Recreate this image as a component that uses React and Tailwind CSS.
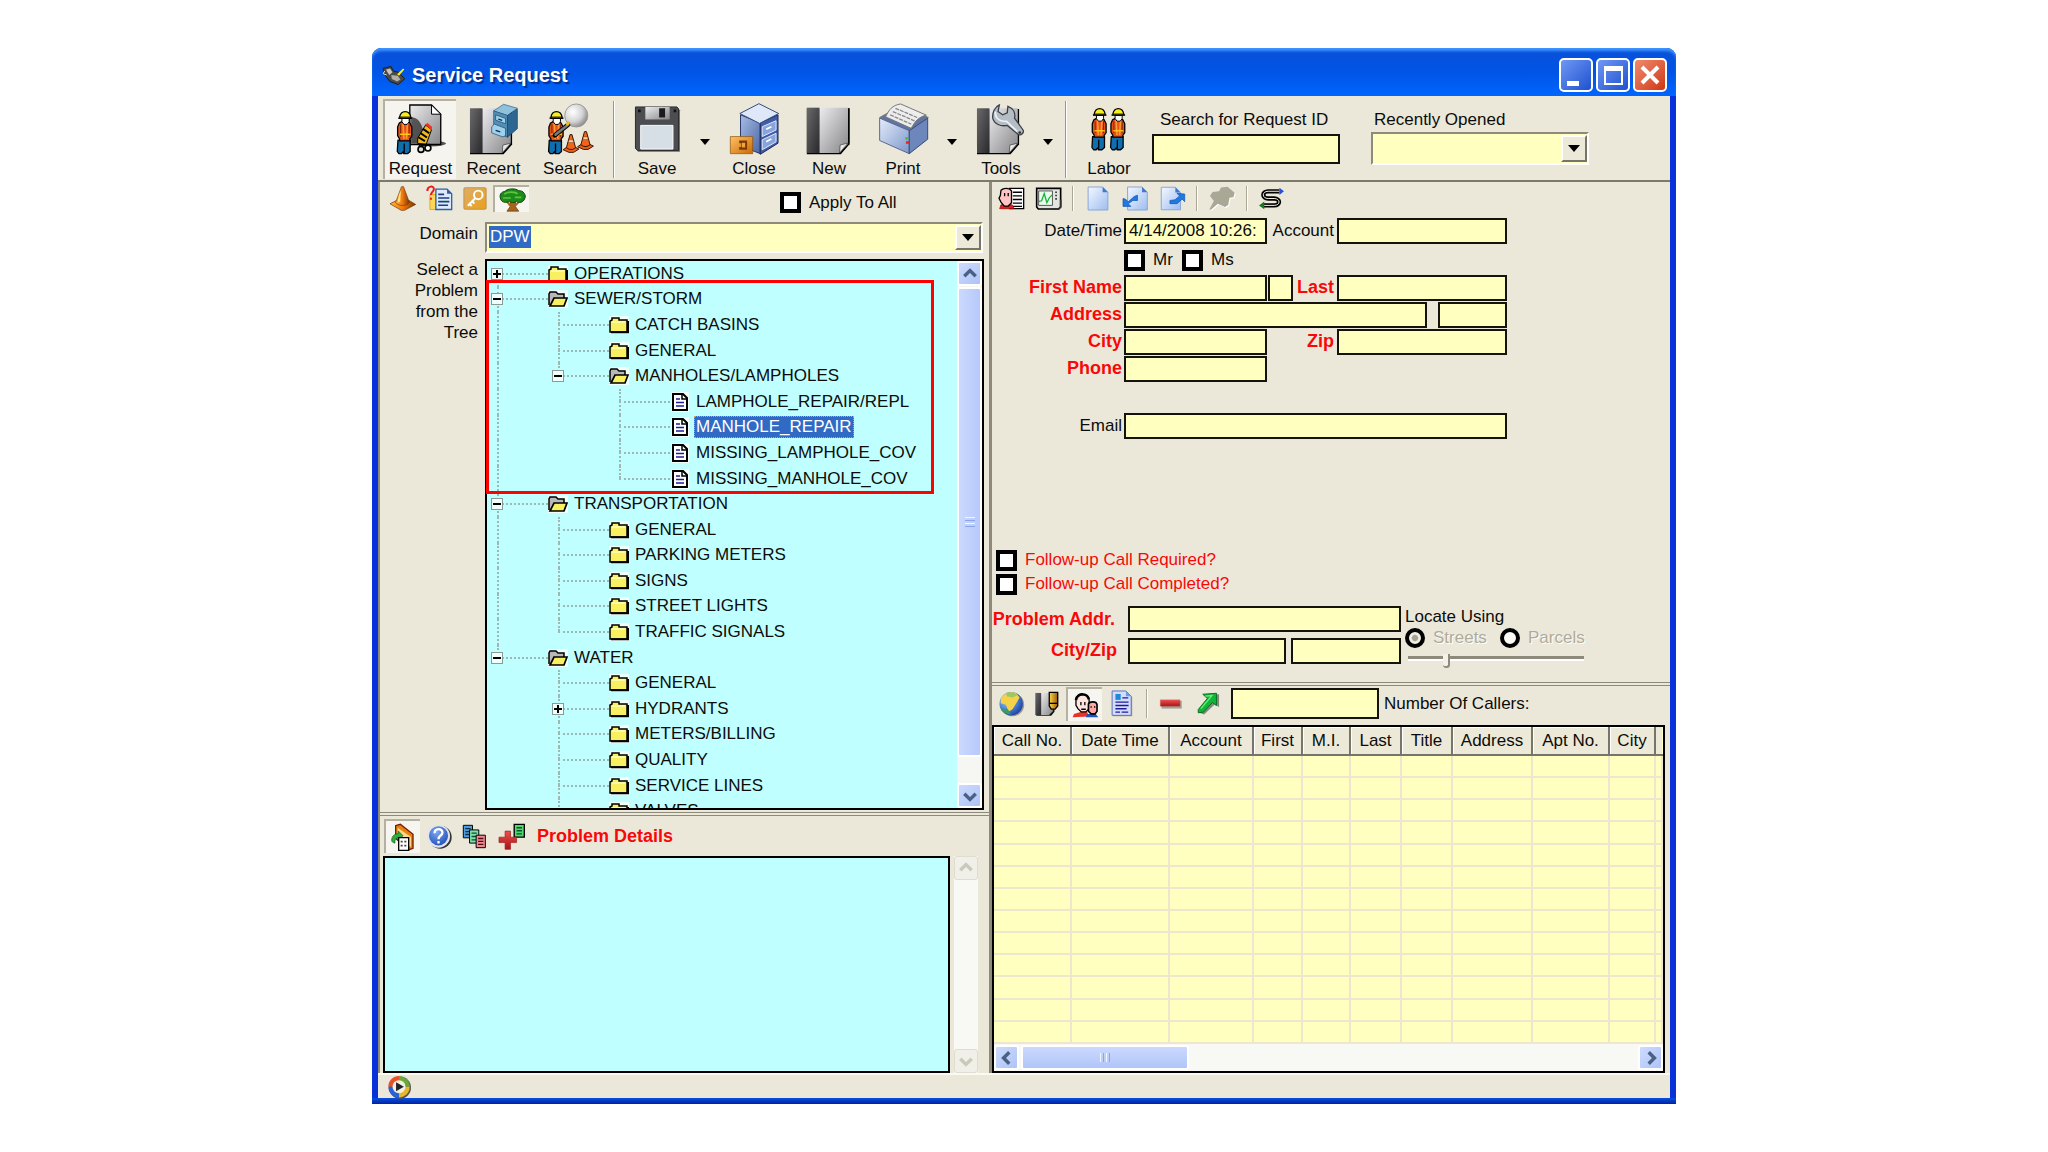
import React from "react";

function Ico({ box, className, children }) {
  return (
    <svg viewBox={box} className={"block shrink-0 " + className} aria-hidden="true">
      {children}
    </svg>
  );
}

function Gradients() {
  return (
    <svg width="0" height="0" className="absolute" aria-hidden="true">
      <defs>
        <linearGradient id="gGray" x1="0" y1="0" x2="1" y2="1">
          <stop offset="0" stopColor="#ececee" />
          <stop offset="1" stopColor="#868689" />
        </linearGradient>
        <linearGradient id="gDark" x1="0" y1="0" x2="1" y2="1">
          <stop offset="0" stopColor="#6a6a6c" />
          <stop offset="1" stopColor="#29292b" />
        </linearGradient>
        <linearGradient id="gFold" x1="0" y1="0" x2="1" y2="1">
          <stop offset="0" stopColor="#ffffff" />
          <stop offset="1" stopColor="#bdbdbd" />
        </linearGradient>
        <linearGradient id="gBlue" x1="0" y1="0" x2="1" y2="1">
          <stop offset="0" stopColor="#e4ecfa" />
          <stop offset="1" stopColor="#7d96cb" />
        </linearGradient>
        <linearGradient id="gBlueD" x1="0" y1="0" x2="1" y2="1">
          <stop offset="0" stopColor="#a9bde4" />
          <stop offset="1" stopColor="#4a66a6" />
        </linearGradient>
        <linearGradient id="gOrange" x1="0" y1="0" x2="1" y2="1">
          <stop offset="0" stopColor="#ffc266" />
          <stop offset="1" stopColor="#c96a06" />
        </linearGradient>
        <linearGradient id="gKey" x1="0" y1="0" x2="1" y2="1">
          <stop offset="0" stopColor="#dcae6c" />
          <stop offset="1" stopColor="#e9a01c" />
        </linearGradient>
        <linearGradient id="gPage" x1="0" y1="0" x2="1" y2="1">
          <stop offset="0" stopColor="#f4f8ff" />
          <stop offset="1" stopColor="#9dbdf0" />
        </linearGradient>
        <linearGradient id="gCone" x1="0" y1="0" x2="1" y2="0">
          <stop offset="0" stopColor="#ffb53a" />
          <stop offset="0.5" stopColor="#f0780c" />
          <stop offset="1" stopColor="#7c3604" />
        </linearGradient>
        <linearGradient id="gRed" x1="0" y1="0" x2="0" y2="1">
          <stop offset="0" stopColor="#f0504e" />
          <stop offset="1" stopColor="#a81216" />
        </linearGradient>
        <linearGradient id="gGold" x1="0" y1="0" x2="1" y2="0">
          <stop offset="0" stopColor="#ffd84a" />
          <stop offset="1" stopColor="#9a5a06" />
        </linearGradient>
        <radialGradient id="gBall" cx="0.35" cy="0.35" r="0.7">
          <stop offset="0" stopColor="#ffffff" />
          <stop offset="0.6" stopColor="#d4d4d4" />
          <stop offset="1" stopColor="#8a8a8a" />
        </radialGradient>
        <radialGradient id="gHelp" cx="0.4" cy="0.3" r="0.8">
          <stop offset="0" stopColor="#7ea6f2" />
          <stop offset="1" stopColor="#1c4bb4" />
        </radialGradient>
        <radialGradient id="gGlobe" cx="0.35" cy="0.35" r="0.8">
          <stop offset="0" stopColor="#a8dcff" />
          <stop offset="0.6" stopColor="#3a72c8" />
          <stop offset="1" stopColor="#1d2c8a" />
        </radialGradient>
      </defs>
    </svg>
  );
}

/* ---------- toolbar drawings ---------- */

function Worker() {
  return (
    <g stroke="#000" strokeWidth="4" strokeLinejoin="round">
      <path d="M90 306h37v34l-8 7h-11l-2-6-5 6H93l-5-7z" fill="#0f6fae" />
      <path d="M109 316v28" />
      <path d="M94 254l12-7h10l10 7 6 12v28l-6 8v6H95v-6l-6-10v-26z" fill="#e8521a" />
      <path d="M98 258v38M124 258v38" stroke="#7c2408" strokeWidth="3" />
      <path d="M105 252l3 50M119 252l-3 50" stroke="#ff9a2c" strokeWidth="5" />
      <path d="M96 288h32" stroke="#ffd21c" strokeWidth="4" />
      <path d="M102 240h22v10l-6 8h-10l-6-8z" fill="#fff" strokeWidth="3" />
      <path d="M95 236c2-12 8-17 17-17s15 5 17 17z" fill="#f6ee1e" />
      <path d="M91 239h42" strokeWidth="5" />
      <path d="M98 235h28" stroke="#a89c0c" strokeWidth="3" />
    </g>
  );
}

function RequestIcon() {
  return (
    <Ico box="85 193 150 158" className="h-[52px] w-[50px]">
      <ellipse cx="190" cy="316" rx="46" ry="9" fill="#555" />
      <path d="M126 199h66l28 28v92h-94z" fill="url(#gGray)" stroke="#000" strokeWidth="4" />
      <path d="M192 199v28h28z" fill="#fff" stroke="#000" strokeWidth="3" />
      <path d="M130 236c26 0 42 30 36 80h-36z" fill="#2c2c2c" opacity=".75" />
      <Worker />
      <path d="M150 300l24-40 18 14-16 44-26-2z" fill="#f0b81c" stroke="#000" strokeWidth="3" />
      <path d="M158 284l20 14M165 271l20 14M152 297l20 12" stroke="#000" strokeWidth="6" />
      <path d="M172 258l8-4 14 12-2 10z" fill="#e8352a" />
      <path d="M154 320h34" stroke="#000" strokeWidth="6" />
      <circle cx="160" cy="334" r="9" fill="#ddd" stroke="#000" strokeWidth="5" />
      <circle cx="181" cy="330" r="9" fill="#fff" stroke="#000" strokeWidth="5" />
    </Ico>
  );
}

function Notebook({ x = 0 }) {
  return (
    <g transform={"translate(" + x + " 0)"}>
      <path d="M308 208h128v108l-26 30H308z" fill="#000" />
      <path d="M308 206h38v136h-38z" fill="url(#gDark)" />
      <path d="M346 206h86v108l-26 28h-60z" fill="url(#gGray)" />
      <path d="M406 342l2-24 24-6z" fill="url(#gFold)" stroke="#333" strokeWidth="2" />
    </g>
  );
}

function RecentIcon() {
  return (
    <Ico box="306 190 150 158" className="h-[52px] w-[50px]">
      <Notebook />
      <path d="M380 214l30-20 42 12-30 22z" fill="#8fc0dc" stroke="#2b5a78" strokeWidth="2" />
      <path d="M380 214l42 14v66l-42-18z" fill="#4f8fb8" stroke="#24506e" strokeWidth="2" />
      <path d="M422 228l30-20v60l-30 26z" fill="#2d6690" stroke="#1b3f5a" strokeWidth="2" />
      <path d="M386 226l30 11v16l-30-11zM374 262l8-8 34 13v22l-8 4-34-12z" fill="#9fd0ec" stroke="#1b3f5a" strokeWidth="2" />
      <path d="M394 239l12 4M386 273l14 5" stroke="#103048" strokeWidth="4" />
    </Ico>
  );
}

function Cone({ x, y }) {
  return (
    <g transform={"translate(" + x + " " + y + ")"} stroke="#3a1402" strokeWidth="3">
      <path d="M-24 48l12-8h24l12 6-16 10h-14z" fill="#e8601a" />
      <path d="M-3 2h6l11 40-9 5h-10l-9-5z" fill="#f0641a" />
      <path d="M-6 18l12 0 2 8H-8z" fill="#ffd0a8" strokeWidth="1" />
    </g>
  );
}

function SearchIcon() {
  return (
    <Ico box="529 190 150 158" className="h-[52px] w-[50px]">
      <g transform="translate(451 -3)">
        <Worker />
      </g>
      <circle cx="623" cy="228" r="35" fill="url(#gBall)" stroke="#9a9a9a" strokeWidth="3" />
      <path d="M598 256l-40 32" stroke="#000" strokeWidth="14" strokeLinecap="round" />
      <path d="M598 256l-38 30" stroke="#77777a" strokeWidth="8" strokeLinecap="round" />
      <path d="M602 250l-10 6" stroke="#e8c01c" strokeWidth="8" />
      <Cone x={607} y={284} />
      <Cone x={651} y={275} />
    </Ico>
  );
}

function SaveIcon() {
  return (
    <Ico box="803 190 140 158" className="h-[52px] w-[47px]">
      <path d="M809 206h126l6 6v126H813z" fill="#000" opacity=".55" />
      <path d="M806 202h126l5 6v126H812l-6-6z" fill="#4c4d50" stroke="#2a2a2c" strokeWidth="3" />
      <path d="M836 202h74v38h-74z" fill="url(#gGray)" />
      <path d="M878 206h18v28h-18z" fill="#1b1b1d" />
      <path d="M822 258h98v72h-98z" fill="#d6dee6" stroke="#fff" strokeWidth="3" />
      <path d="M814 210h8v8h-8zM922 210h8v8h-8z" fill="#111" />
    </Ico>
  );
}

function CloseIcon() {
  return (
    <Ico box="1083 190 155 158" className="h-[52px] w-[51px]">
      <path d="M1118 226l60 24v94l-60-24z" fill="url(#gBlueD)" stroke="#26386a" strokeWidth="3" />
      <path d="M1178 250l54-24v86l-54 34z" fill="#3f5ea6" stroke="#1b2b58" strokeWidth="3" />
      <path d="M1116 222l58-30 60 30-58 30z" fill="#dfe8f8" stroke="#33467c" strokeWidth="3" />
      <path d="M1184 262l42-18v28l-42 20zM1184 302l42-20v26l-42 24z" fill="#88a4dc" stroke="#dfe8fa" strokeWidth="3" />
      <path d="M1196 270l16-8M1196 308l16-9" stroke="#fff" strokeWidth="5" />
      <path d="M1087 292h68v52h-68z" fill="url(#gOrange)" stroke="#8a4a06" strokeWidth="2" />
      <path d="M1114 304h24v28h-24v-8h6v-12h-6z" fill="#7a3c04" />
      <path d="M1122 311h10v14h-10z" fill="#f5a33a" />
    </Ico>
  );
}

function NewIcon() {
  return (
    <Ico box="306 198 140 150" className="h-[50px] w-[47px]">
      <Notebook />
      <path d="M434 208v106" stroke="#000" strokeWidth="4" />
    </Ico>
  );
}

function PrintIcon() {
  return (
    <Ico box="235 190 155 158" className="h-[52px] w-[51px]">
      <path d="M240 234l62-34 86 34-62 44z" fill="#5f74a4" stroke="#777" strokeWidth="3" />
      <path d="M240 236l90 38v70l-90-40z" fill="url(#gBlue)" stroke="#55698f" strokeWidth="3" />
      <path d="M330 274l56-38v64l-56 44z" fill="#6d86bc" stroke="#3a4a70" strokeWidth="3" />
      <path d="M258 232c10-20 20-36 46-39l78 34c-20 4-34 16-46 40z" fill="#ededed" stroke="#777" strokeWidth="3" />
      <path d="M288 206l66 28M280 216l66 28M272 226l64 28" stroke="#8a8a8a" strokeWidth="4" strokeDasharray="12 3" />
      <path d="M318 294h8v7h-8z" fill="#2ec82e" />
      <path d="M320 306h9v8h-9z" fill="#e82a1a" />
    </Ico>
  );
}

function ToolsIcon() {
  return (
    <Ico box="534 190 150 158" className="h-[52px] w-[50px]">
      <Notebook x={228} />
      <path
        d="M604 196l-4 20 14 10 14-6 2-20c16 6 24 20 20 36l26 36c4 8-6 18-14 14l-34-28c-20 4-40-4-44-22-2-16 6-34 20-40z"
        fill="#b4bcc4"
        stroke="#3a4048"
        strokeWidth="4"
      />
      <path d="M592 216c-2 16 8 30 34 30l32 30" fill="none" stroke="#eef2f6" strokeWidth="5" />
      <circle cx="666" cy="280" r="4" fill="#333" />
    </Ico>
  );
}

function LaborIcon() {
  return (
    <Ico box="85 215 112 138" className="h-[45px] w-[36px]">
      <Worker />
      <g transform="translate(58 0)">
        <Worker />
      </g>
    </Ico>
  );
}

function AppIcon() {
  return (
    <Ico box="42 74 70 60" className="h-[20px] w-[23px]">
      <path d="M45 84l24-6 8 14 16 4 18 20-20 17-26-10-14-20z" fill="#4a4a48" stroke="#1c1c1a" strokeWidth="3" />
      <path d="M54 88l12-4 8 12-10 8z" fill="#c8c8c0" />
      <path d="M70 104l20 2 8 12-10 6-16-8z" fill="#b0b0a8" />
      <path d="M88 102l18-18 4 3-16 19z" fill="#f6ee1e" />
      <path d="M50 92l-4 8 10 4" fill="none" stroke="#eee" strokeWidth="3" />
    </Ico>
  );
}

/* ---------- small strip drawings ---------- */

function ConeIcon() {
  return (
    <Ico box="60 440 82 76" className="h-[25px] w-[27px]">
      <path d="M63 494l20-10h38l20 12-34 18h-10z" fill="url(#gCone)" stroke="#6b2c02" strokeWidth="2" />
      <path d="M98 442h6l18 48c-8 12-34 12-42 0z" fill="url(#gCone)" stroke="#7c3604" strokeWidth="2" />
      <path d="M90 468l6-16-2 36-8 2z" fill="#ffe28a" />
    </Ico>
  );
}

function FormIcon() {
  return (
    <Ico box="172 438 82 78" className="h-[26px] w-[27px]">
      <path d="M184 466h30v46h-30z" fill="#ffd65a" stroke="#e8a820" strokeWidth="3" />
      <path d="M202 450h34l14 14v48h-48z" fill="#dceafc" stroke="#2f5fa0" strokeWidth="4" />
      <path d="M236 450v14h14z" fill="#2f5fa0" />
      <path d="M209 466h18M209 477h34M209 488h34M209 499h30" stroke="#1b3f78" strokeWidth="5" />
      <path d="M176 456c0-16 20-18 20-6 0 8-9 8-9 18M187 476v6" fill="none" stroke="#e81c1c" strokeWidth="6" />
    </Ico>
  );
}

function KeyIcon() {
  return (
    <Ico box="286 444 72 70" className="h-[23px] w-[24px]">
      <rect x="288" y="446" width="68" height="66" rx="4" fill="url(#gKey)" stroke="#b08030" strokeWidth="2" />
      <circle cx="332" cy="468" r="13" fill="none" stroke="#fff" strokeWidth="6" />
      <path d="M322 479l-22 22M306 496l6 6M314 488l6 6" stroke="#fff" strokeWidth="6" />
    </Ico>
  );
}

function TreeIcon() {
  return (
    <Ico box="396 442 82 72" className="h-[24px] w-[27px]">
      <path d="M430 478h16v20l10 14h-36l10-14z" fill="#a8641c" stroke="#5a3208" strokeWidth="2" />
      <path d="M434 500l-14-18M444 496l16-16" stroke="#a8641c" strokeWidth="6" />
      <path d="M400 472c-4-14 8-20 14-20 8-10 34-10 42-2 14-2 24 14 18 24-4 12-18 14-24 8-8 6-18 4-22 0-10 6-26 4-28-10z" fill="#1f8a1c" stroke="#0c4a0a" strokeWidth="3" />
      <path d="M412 460c10-8 34-8 40 0M408 472h24M444 470h20" stroke="#5ac83a" strokeWidth="5" fill="none" />
    </Ico>
  );
}

function CallerIcon() {
  return (
    <Ico box="596 446 80 70" className="h-[23px] w-[27px]">
      <path d="M630 450h43v62h-43z" fill="#fff" stroke="#000" strokeWidth="4" />
      <path d="M640 462h28M640 473h28M640 484h28M640 495h28M640 505h28" stroke="#000" strokeWidth="4" />
      <path d="M600 512l4-12h34l6 12z" fill="#e81c1c" stroke="#900" strokeWidth="2" />
      <path d="M604 456c8-8 26-8 32 2v36l-10 10h-12l-10-12-6-12 4-8z" fill="#ffc4c4" stroke="#000" strokeWidth="4" />
      <path d="M615 464v10M626 464v10" stroke="#000" strokeWidth="4" />
    </Ico>
  );
}

function MonitorIcon() {
  return (
    <Ico box="707 446 80 70" className="h-[23px] w-[27px]">
      <path d="M711 450h73v56l-6 7h-62l-5-6z" fill="#e4e4e0" stroke="#000" strokeWidth="5" />
      <path d="M717 458h42v44h-42z" fill="#eafcea" stroke="#555" strokeWidth="3" />
      <path d="M718 490l8-2 8-22 8 28 8-16 8-8" fill="none" stroke="#14b43c" strokeWidth="4" />
      <path d="M768 462h4M768 472h4M768 482h4" stroke="#000" strokeWidth="5" />
      <path d="M784 484v24l-8 6h-20" fill="none" stroke="#333" strokeWidth="5" />
    </Ico>
  );
}

const PAGE_BOX = { plain: "864 440 66 76", in: "966 440 80 76", out: "860 440 84 76" };

function PageIcon({ arrow = "plain" }) {
  return (
    <Ico box={PAGE_BOX[arrow]} className={arrow === "plain" ? "h-[25px] w-[22px]" : "h-[25px] w-[27px]"}>
      <g transform={arrow === "in" ? "translate(115 0)" : undefined}>
        <path d="M867 443h44l16 16v54h-60z" fill="url(#gPage)" stroke="#86a6dc" strokeWidth="3" />
        <path d="M911 443v16h16z" fill="#3f78d0" />
      </g>
      {arrow === "in" && <path d="M968 478v24h24l-8-8 14-10h14v-16l-10 4-18 16-8-8z" fill="#1f7ae0" stroke="#0d4fae" strokeWidth="2" />}
      {arrow === "out" && <path d="M940 464v24l-8-8-16 14h-22v-10l16-2 14-12-8-8z" fill="#1f7ae0" stroke="#0d4fae" strokeWidth="2" />}
    </Ico>
  );
}

function PinIcon() {
  return (
    <Ico box="1224 440 86 76" className="h-[25px] w-[28px]">
      <path d="M1264 444l20-2 22 18-4 14-12 2-4 22-10 6-22-10-20 18h-6l14-26-12-16 8-12 20-2z" fill="#fff" transform="translate(3 3)" />
      <path d="M1264 444l20-2 22 18-4 14-12 2-4 22-10 6-22-10-20 18h-6l14-26-12-16 8-12 20-2z" fill="#a9a796" />
    </Ico>
  );
}

function SwapIcon() {
  return (
    <Ico box="54 446 80 70" className="h-[23px] w-[27px]">
      <path d="M118 459H84c-20 0-20 22 0 22h18c20 0 20 21 0 21H70" fill="none" stroke="#000" strokeWidth="13" />
      <path d="M118 459H84c-20 0-20 22 0 22h18c20 0 20 21 0 21H70" fill="none" stroke="#f4f2e8" strokeWidth="3" />
      <path d="M118 448l14 11-14 11z" fill="#2c4ce0" />
      <path d="M72 490l-16 12 16 12z" fill="#127a22" />
    </Ico>
  );
}

function FolderOutIcon() {
  return (
    <Ico box="72 68 72 84" className="h-[28px] w-[24px]">
      <path d="M86 76l14-4 38 30v42l-12 4-40-34z" fill="#e8820c" stroke="#7a1c04" strokeWidth="4" />
      <path d="M92 82l40 28v30l-40-28z" fill="#ffd890" />
      <path d="M74 120c0-12 8-20 20-20v-8l14 14-14 14v-8c-8 0-12 8-10 16-6 0-10-4-10-8z" fill="#2fae3c" stroke="#0c5a14" strokeWidth="2" />
      <path d="M95 112h30v38H95z" fill="#fff" stroke="#000" strokeWidth="4" />
      <path d="M101 124h6M112 124h6M101 136h6M112 136h6" stroke="#444" strokeWidth="5" />
    </Ico>
  );
}

function HelpIcon() {
  return (
    <Ico box="174 70 80 76" className="h-[25px] w-[27px]">
      <circle cx="216" cy="110" r="35" fill="#333" />
      <circle cx="211" cy="107" r="35" fill="#dfe4ee" />
      <circle cx="211" cy="106" r="29" fill="url(#gHelp)" />
      <path d="M199 98c0-16 24-16 24-2 0 10-12 8-12 20M211 122v7" fill="none" stroke="#fff" strokeWidth="7" />
    </Ico>
  );
}

function SheetsIcon() {
  return (
    <Ico box="284 66 74 76" className="h-[25px] w-[25px]">
      <path d="M287 70h28v38h-28z" fill="#4f9bd8" stroke="#000" strokeWidth="3" />
      <path d="M293 80h16M293 89h16M293 98h16" stroke="#0c2c50" strokeWidth="4" />
      <path d="M306 84h28v40h-28z" fill="#7fe0a8" stroke="#000" strokeWidth="3" />
      <path d="M312 94h16M312 104h16M312 114h16" stroke="#0c5030" strokeWidth="4" />
      <path d="M326 100h28v38h-28z" fill="#f08a94" stroke="#000" strokeWidth="3" />
      <path d="M332 110h16M332 119h16M332 128h16" stroke="#501018" strokeWidth="4" />
    </Ico>
  );
}

function AddSheetIcon() {
  return (
    <Ico box="392 66 80 80" className="h-[27px] w-[27px]">
      <path d="M440 70h30v38h-30z" fill="#4fd870" stroke="#000" strokeWidth="4" />
      <path d="M447 80h16M447 89h16M447 98h16" stroke="#0c5030" strokeWidth="4" />
      <path d="M413 90h16v18h18v16h-18v20h-16v-20h-18v-16h18z" fill="url(#gRed)" stroke="#a01c1c" strokeWidth="2" />
    </Ico>
  );
}

function GlobeIcon() {
  return (
    <Ico box="36 28 82 80" className="h-[26px] w-[27px]">
      <circle cx="80" cy="70" r="36" fill="#666" opacity=".6" />
      <circle cx="76" cy="67" r="36" fill="url(#gGlobe)" />
      <path d="M44 52c8-16 30-24 46-18l12 14-8 14-14 22-12 8-8-22-16-4z" fill="#f6d24a" />
      <path d="M62 34c12-4 24-2 34 6l-16 8-18-4z" fill="#9cc860" />
      <path d="M44 82c6 12 18 18 32 18l-10-16z" fill="#3c9a5a" />
    </Ico>
  );
}

function BookPenIcon() {
  return (
    <Ico box="146 28 78 80" className="h-[26px] w-[26px]">
      <path d="M152 36h56v56l-10 12h-46z" fill="#111" />
      <path d="M149 34h18v68h-18z" fill="url(#gDark)" />
      <path d="M167 34h36v56l-12 12h-24z" fill="url(#gGray)" />
      <path d="M192 32h26v42l-8 10h-12l-6-10z" fill="url(#gGold)" stroke="#000" strokeWidth="4" />
      <path d="M192 66h26" stroke="#000" strokeWidth="4" />
    </Ico>
  );
}

function PeopleIcon() {
  return (
    <Ico box="262 36 82 78" className="h-[26px] w-[27px]">
      <path d="M264 112l4-10 20-6h20l6 14z" fill="#e0342c" />
      <path d="M304 112l4-10h26l8 10z" fill="#1c54c8" />
      <path d="M274 60c0-12 10-18 20-18s20 6 20 18v26l-10 10h-14l-10-10-6-10z" fill="#ffe4e0" stroke="#000" strokeWidth="4" />
      <path d="M274 60c2-12 12-18 22-17 10 0 16 8 17 15" fill="none" stroke="#000" strokeWidth="8" />
      <path d="M289 66v10M301 66v10M290 88h14" stroke="#000" strokeWidth="4" />
      <path d="M312 72c2-8 24-10 26 2v20l-6 8h-12l-8-8z" fill="#ffa8a4" stroke="#000" strokeWidth="5" />
      <path d="M320 78v6M331 78v6" stroke="#000" strokeWidth="3" />
    </Ico>
  );
}

function ReportIcon() {
  return (
    <Ico box="378 26 66 82" className="h-[27px] w-[22px]">
      <path d="M384 32h42l16 16v58h-58z" fill="#666" opacity=".5" />
      <path d="M381 29h42l16 16v58h-58z" fill="#d4dcfa" stroke="#5a70c0" strokeWidth="3" />
      <path d="M423 29v16h16z" fill="#6a9ae8" />
      <path d="M391 38h16v18h-16z" fill="#1c8ad8" />
      <path d="M412 50h18M391 63h40M391 73h40M391 83h34M391 93h14M410 93h20" stroke="#1c1ca0" strokeWidth="4" />
    </Ico>
  );
}

function MinusIcon() {
  return (
    <Ico box="522 28 72 80" className="h-[26px] w-[24px]">
      <path d="M529 58h62v24h-62z" fill="#555" opacity=".5" />
      <path d="M525 55h61v20h-61z" fill="url(#gRed)" stroke="#c07070" strokeWidth="1" />
    </Ico>
  );
}

function GoIcon() {
  return (
    <Ico box="632 28 72 80" className="h-[26px] w-[24px]">
      <path d="M660 40l42-2v40l-12-10-34 32-16-6 28-40z" fill="#444" opacity=".6" />
      <path d="M652 38l42-3v38l-12-10-28 30-16 2v-10l28-34z" fill="#12b43a" stroke="#06701c" strokeWidth="3" />
      <path d="M660 44l20-2-34 40" fill="none" stroke="#6cf07c" strokeWidth="4" />
    </Ico>
  );
}

function PlayIcon() {
  return (
    <Ico box="54 24 78 74" className="h-[24px] w-[26px]">
      <circle cx="96" cy="63" r="34" fill="#555" />
      <path d="M93 60V27a33 33 0 0 0-33 33z" fill="#e8502a" />
      <path d="M93 60h33a33 33 0 0 0-33-33z" fill="#6aa83a" />
      <path d="M93 60v33a33 33 0 0 0 33-33z" fill="#e8b82a" />
      <path d="M93 60H60a33 33 0 0 0 33 33z" fill="#2a62d8" />
      <circle cx="93" cy="60" r="20" fill="#f2efe4" />
      <path d="M84 46l24 14-24 14z" fill="#222" />
    </Ico>
  );
}

/* ---------- tree drawings ---------- */

function ClosedFolder() {
  return (
    <Ico box="0 0 20 18" className="h-[18px] w-[20px] bg-[#effffb]">
      <path d="M1 16V5l2-1V2h7v2h8v12z" fill="#f8f060" stroke="#000" strokeWidth="1.5" />
      <path d="M2 16.2h17V5" fill="none" stroke="#000" strokeWidth="2" />
      <path d="M3 6h13" stroke="#ffffb8" strokeWidth="1.5" />
    </Ico>
  );
}

function OpenFolder() {
  return (
    <Ico box="0 0 20 18" className="h-[18px] w-[20px] bg-[#effffb]">
      <path d="M1 15V4l1-2h6l2 2h6v4" fill="#b8b8b8" stroke="#000" strokeWidth="1.5" />
      <path d="M2 16l4-8h13l-3 8z" fill="#f8f060" stroke="#000" strokeWidth="1.7" />
    </Ico>
  );
}

function LeafIcon() {
  return (
    <Ico box="0 0 20 20" className="h-[20px] w-[20px]">
      <path d="M1 0h18v20H1z" fill="#effffb" />
      <path d="M3 2h10l4 4v12H3z" fill="#fff" stroke="#000" strokeWidth="2" />
      <path d="M12 2v5h5" fill="none" stroke="#000" strokeWidth="1.5" />
      <path d="M6 7h4M6 10.500h8M6 14h8" stroke="#1c1c98" strokeWidth="1.700" />
    </Ico>
  );
}

const TREE = [
  { level: 1, text: "OPERATIONS", toggle: "+", first: true },
  { level: 1, text: "SEWER/STORM", toggle: "-" },
  { level: 2, text: "CATCH BASINS", lines: [1] },
  { level: 2, text: "GENERAL", lines: [1] },
  { level: 2, text: "MANHOLES/LAMPHOLES", toggle: "-", last: true, lines: [1] },
  { level: 3, text: "LAMPHOLE_REPAIR/REPL", leaf: true, lines: [1, 0] },
  { level: 3, text: "MANHOLE_REPAIR", leaf: true, selected: true, lines: [1, 0] },
  { level: 3, text: "MISSING_LAMPHOLE_COV", leaf: true, lines: [1, 0] },
  { level: 3, text: "MISSING_MANHOLE_COV", leaf: true, last: true, lines: [1, 0] },
  { level: 1, text: "TRANSPORTATION", toggle: "-" },
  { level: 2, text: "GENERAL", lines: [1] },
  { level: 2, text: "PARKING METERS", lines: [1] },
  { level: 2, text: "SIGNS", lines: [1] },
  { level: 2, text: "STREET LIGHTS", lines: [1] },
  { level: 2, text: "TRAFFIC SIGNALS", last: true, lines: [1] },
  { level: 1, text: "WATER", toggle: "-", last: true },
  { level: 2, text: "GENERAL", lines: [0] },
  { level: 2, text: "HYDRANTS", toggle: "+", lines: [0] },
  { level: 2, text: "METERS/BILLING", lines: [0] },
  { level: 2, text: "QUALITY", lines: [0] },
  { level: 2, text: "SERVICE LINES", lines: [0] },
  { level: 2, text: "VALVES", last: true, lines: [0] },
];

function Toggle({ sign }) {
  return (
    <button
      type="button"
      aria-label={sign === "+" ? "Expand" : "Collapse"}
      className="absolute top-1/2 left-0 flex size-[12px] -translate-x-1/2 -translate-y-1/2 items-center justify-center border border-[#8a9a94] bg-[#f0fffc]"
    >
      <svg viewBox="0 0 8 8" className="size-[8px]" aria-hidden="true">
        <path d={sign === "+" ? "M0 4h8M4 0v8" : "M0 4h8"} stroke="#000" strokeWidth="2" />
      </svg>
    </button>
  );
}

function TreeRow({ node }) {
  return (
    <li className="flex min-h-0 items-center">
      {(node.lines || []).map((on, i) => (
        <span key={i} className="h-full w-[61px] shrink-0 pl-[10px]">
          <span className={on ? "block h-full border-l-2 border-dotted border-[#9fb8b4]" : "block h-full"} />
        </span>
      ))}
      <span className="h-full w-[61px] shrink-0 pl-[10px]">
        <span className="relative flex h-full flex-col">
          <span className={node.first ? "flex-1" : "flex-1 border-l-2 border-dotted border-[#9fb8b4]"} />
          <span className={node.last ? "flex-1 border-t-2 border-dotted border-[#9fb8b4]" : "flex-1 border-t-2 border-l-2 border-dotted border-[#9fb8b4]"} />
          {node.toggle && <Toggle sign={node.toggle} />}
        </span>
      </span>
      {node.leaf ? <LeafIcon /> : node.toggle === "-" ? <OpenFolder /> : <ClosedFolder />}
      <span
        className={
          node.selected
            ? "ml-[4px] bg-[#316ac5] px-[2px] leading-[22px] text-white outline-1 -outline-offset-1 outline-dotted outline-[#d8a060]"
            : "ml-[4px] px-[2px] leading-[22px]"
        }
      >
        {node.text}
      </span>
    </li>
  );
}

/* ---------- shared controls ---------- */

const CHEVRON = {
  up: "M2 9l5-5 5 5",
  down: "M2 5l5 5 5-5",
  left: "M9 2L4 7l5 5",
  right: "M5 2l5 5-5 5",
};

function ScrollButton({ dir, disabled }) {
  return (
    <button
      type="button"
      disabled={disabled}
      aria-label={"Scroll " + dir}
      className={
        disabled
          ? "flex size-[24px] shrink-0 items-center justify-center rounded-[3px] border border-[#deddd0] bg-[#f1f0e8]"
          : "flex size-[25px] shrink-0 items-center justify-center rounded-[3px] border-2 border-white bg-linear-to-br from-[#cddbfe] to-[#aec3f6]"
      }
    >
      <svg viewBox="0 0 14 14" className="size-[16px]" aria-hidden="true">
        <path d={CHEVRON[dir]} fill="none" stroke={disabled ? "#cbc9bc" : "#4a6186"} strokeWidth="3" />
      </svg>
    </button>
  );
}

function DropGlyph() {
  return (
    <span className="pointer-events-none absolute top-[3px] right-[2px] bottom-[3px] flex w-[26px] items-center justify-center border-2 border-t-white border-r-[#77746a] border-b-[#77746a] border-l-white bg-[#ece9d8]">
      <svg viewBox="0 0 12 7" className="h-[7px] w-[12px]" aria-hidden="true">
        <path d="M0 0h12L6 7z" fill="#000" />
      </svg>
    </span>
  );
}

const FIELD = "h-[26px] min-w-0 border-2 border-[#14140c] bg-[#ffffc0] px-[3px] leading-none outline-none";
const CHECK = "size-[21px] shrink-0 appearance-none border-4 border-black bg-white";
const REQUIRED = "text-[18px] font-bold text-[#f80808]";
const ROW = "flex h-[27px] items-center";
const LABEL = "w-[131px] shrink-0 pr-px text-right";
const GAP_LABEL = "flex-1 pr-[3px] text-right";

function StripSep() {
  return <span className="h-[25px] w-[2px] shrink-0 border-l border-[#aaa797] bg-white" />;
}

function StripButton({ label, pressed, className, children }) {
  return (
    <button
      type="button"
      aria-label={label}
      className={
        "flex shrink-0 items-center justify-center " +
        (pressed ? "border-t-2 border-l-2 border-[#b4b1a2] bg-[#f6f5f0] " : "") +
        className
      }
    >
      {children}
    </button>
  );
}

function ToolButton({ label, pressed, className, children }) {
  return (
    <button
      type="button"
      className={
        "flex h-[80px] shrink-0 flex-col items-center justify-end leading-[20px] " +
        (pressed ? "border-t-2 border-l-2 border-[#b4b1a2] bg-[#f5f4ee] " : "") +
        className
      }
    >
      {children}
      <span className="mt-[4px]">{label}</span>
    </button>
  );
}

function MenuArrow({ label, className }) {
  return (
    <button type="button" aria-label={label} className={"flex h-[80px] shrink-0 items-center justify-center pt-[6px] " + className}>
      <svg viewBox="0 0 10 6" className="h-[6px] w-[10px]" aria-hidden="true">
        <path d="M0 0h10L5 6z" fill="#000" />
      </svg>
    </button>
  );
}

function ToolSep() {
  return <span className="h-[77px] w-[2px] shrink-0 border-l border-[#9a9788] bg-white" />;
}

function TitleBar() {
  const btn = "flex size-[34px] items-center justify-center rounded-[5px] border-2 border-white";
  return (
    <header className="flex h-[48px] items-center rounded-t-[9px] bg-linear-to-b from-[#0a50d8] via-[#0054e6] to-[#0066ff] pt-[6px] pr-[9px] pl-[10px] shadow-[inset_0_4px_3px_-1px_#3f95ff]">
      <AppIcon />
      <h1 className="ml-[7px] flex-1 text-[20px] font-bold text-white [text-shadow:2px_2px_1px_#0a2f8c]">Service Request</h1>
      <div className="flex gap-[3px]">
        <button type="button" aria-label="Minimize" className={btn + " bg-linear-to-br from-[#6f97f4] to-[#1f4fd0]"}>
          <svg viewBox="0 0 28 28" className="size-[28px]" aria-hidden="true">
            <path d="M5 20h12v5H5z" fill="#fff" />
          </svg>
        </button>
        <button type="button" aria-label="Maximize" className={btn + " bg-linear-to-br from-[#6f97f4] to-[#1f4fd0]"}>
          <svg viewBox="0 0 28 28" className="size-[28px]" aria-hidden="true">
            <path d="M6 8h17v15H6z" fill="none" stroke="#fff" strokeWidth="2" />
            <path d="M5 5h19v5H5z" fill="#fff" />
          </svg>
        </button>
        <button type="button" aria-label="Close window" className={btn + " bg-linear-to-br from-[#ee8a6c] to-[#cf3408]"}>
          <svg viewBox="0 0 28 28" className="size-[28px]" aria-hidden="true">
            <path d="M6 6l16 16M22 6L6 22" stroke="#fff" strokeWidth="4" />
          </svg>
        </button>
      </div>
    </header>
  );
}

function Toolbar() {
  return (
    <div className="flex h-[86px] items-center border-b-2 border-[#7d7a6c] pt-[2px] pl-[5px]">
      <ToolButton label="Request" pressed className="w-[73px]"><RequestIcon /></ToolButton>
      <ToolButton label="Recent" className="w-[75px]"><RecentIcon /></ToolButton>
      <ToolButton label="Search" className="w-[78px]"><SearchIcon /></ToolButton>
      <span className="w-[4px]" />
      <ToolSep />
      <ToolButton label="Save" className="ml-[8px] w-[68px]"><SaveIcon /></ToolButton>
      <MenuArrow label="Save options" className="w-[28px]" />
      <ToolButton label="Close" className="w-[70px]"><CloseIcon /></ToolButton>
      <ToolButton label="New" className="w-[80px]"><NewIcon /></ToolButton>
      <ToolButton label="Print" className="w-[68px]"><PrintIcon /></ToolButton>
      <MenuArrow label="Print options" className="w-[30px]" />
      <ToolButton label="Tools" className="w-[68px]"><ToolsIcon /></ToolButton>
      <MenuArrow label="Tools options" className="w-[26px]" />
      <span className="w-[4px]" />
      <ToolSep />
      <ToolButton label="Labor" className="mr-[5px] ml-[4px] w-[76px]">
        <span className="flex h-[48px] items-start"><LaborIcon /></span>
      </ToolButton>
      <div className="flex w-[188px] flex-col pb-[7px]">
        <label htmlFor="request-id" className="pl-[8px] leading-[24px]">Search for Request ID</label>
        <input id="request-id" type="text" className="mt-[2px] h-[30px] border-2 border-[#14140c] bg-[#ffffc0] px-[3px] outline-none" />
      </div>
      <div className="ml-[31px] flex w-[218px] flex-col pb-[6px]">
        <label htmlFor="recent" className="pl-[3px] leading-[24px]">Recently Opened</label>
        <span className="relative flex">
          <select id="recent" className="h-[33px] w-full appearance-none border-2 border-t-[#8d8a7c] border-r-white border-b-white border-l-[#8d8a7c] bg-[#ffffc0] px-[4px] outline-none">
            <option></option>
          </select>
          <DropGlyph />
        </span>
      </div>
    </div>
  );
}

function LeftPanel() {
  return (
    <section className="flex min-w-0 flex-col border-l-2 border-[#8d8a7c]">
      <div className="flex h-[40px] items-start pt-[3px] pl-[8px]">
        <StripButton label="Cone" className="h-[26px] w-[28px]"><ConeIcon /></StripButton>
        <StripButton label="Form" className="ml-[9px] h-[26px] w-[28px]"><FormIcon /></StripButton>
        <StripButton label="Key" className="ml-[8px] h-[26px] w-[28px]"><KeyIcon /></StripButton>
        <StripButton label="Tree" pressed className="ml-[4px] h-[27px] w-[36px]"><TreeIcon /></StripButton>
        <label className="mt-[5px] ml-[251px] flex items-center gap-[8px]">
          <input type="checkbox" className={CHECK} />
          Apply To All
        </label>
      </div>

      <div className="flex items-start">
        <label htmlFor="domain" className="w-[101px] shrink-0 pr-[3px] text-right leading-[24px]">Domain</label>
        <span className="relative mr-[6px] ml-[4px] flex flex-1">
          <select
            id="domain"
            className="h-[31px] w-full appearance-none border-2 border-t-[#8d8a7c] border-r-white border-b-white border-l-[#8d8a7c] bg-[#ffffc0] bg-[linear-gradient(#316ac5,#316ac5)] bg-[length:42px_22px] bg-[position:2px_2px] bg-no-repeat pr-[30px] pb-[2px] pl-[3px] text-white outline-none"
          >
            <option>DPW</option>
          </select>
          <DropGlyph />
        </span>
      </div>

      <div className="mt-[6px] flex items-start pr-[5px]">
        <p className="w-[101px] shrink-0 pr-[3px] text-right leading-[21px]">
          Select a<br />Problem<br />from the<br />Tree
        </p>
        <div className="relative ml-[4px] flex h-[551px] min-w-0 flex-1 border-2 border-black bg-[#c0ffff]">
          <div className="min-w-0 flex-1 overflow-hidden">
            <ul className="grid h-[563px] auto-rows-fr">
              {TREE.map((node, i) => (
                <TreeRow key={i} node={node} />
              ))}
            </ul>
          </div>
          <div className="flex w-[25px] flex-col bg-[#f6f6f2]">
            <ScrollButton dir="up" />
            <div className="mt-[1px] flex h-[470px] flex-col items-center justify-center gap-[2px] rounded-[3px] border-2 border-white bg-linear-to-r from-[#cbd9fe] to-[#b6c9fb]">
              <span className="h-px w-[10px] bg-[#f0f5ff]" />
              <span className="h-px w-[10px] bg-[#8aa6e8]" />
              <span className="h-px w-[10px] bg-[#f0f5ff]" />
              <span className="h-px w-[10px] bg-[#8aa6e8]" />
            </div>
            <span className="flex-1" />
            <ScrollButton dir="down" />
          </div>
          <span className="pointer-events-none absolute top-[19px] -left-px h-[214px] w-[448px] border-3 border-[#ff0000]" />
        </div>
      </div>

      <div className="mt-[2px] flex h-[44px] items-center border-t-4 border-double border-[#8d8a7c] pl-[4px]">
        <StripButton label="Details" pressed className="h-[34px] w-[36px]"><FolderOutIcon /></StripButton>
        <StripButton label="Help" className="ml-[6px] h-[27px] w-[27px]"><HelpIcon /></StripButton>
        <StripButton label="Sheets" className="ml-[9px] h-[27px] w-[25px]"><SheetsIcon /></StripButton>
        <StripButton label="Add sheet" className="ml-[11px] h-[27px] w-[27px]"><AddSheetIcon /></StripButton>
        <label htmlFor="details" className={"ml-[12px] leading-[24px] " + REQUIRED}>Problem Details</label>
      </div>
      <div className="flex min-h-[217px] flex-1 pr-[11px] pl-[3px]">
        <textarea id="details" className="block min-w-0 flex-1 resize-none border-2 border-black bg-[#c0ffff] p-[4px] outline-none" />
        <div className="ml-[4px] flex w-[24px] flex-col justify-between bg-[#f8f8f4]">
          <ScrollButton dir="up" disabled />
          <ScrollButton dir="down" disabled />
        </div>
      </div>
    </section>
  );
}

function CallerForm() {
  return (
    <div className="flex h-[500px] flex-col">
      <div className="flex h-[35px] items-start gap-[10px] pt-[4px] pl-[6px]">
        <StripButton label="Caller" className="h-[25px] w-[27px]"><CallerIcon /></StripButton>
        <StripButton label="Monitor" className="h-[25px] w-[27px]"><MonitorIcon /></StripButton>
        <StripSep />
        <StripButton label="New page" className="h-[25px] w-[28px]"><PageIcon /></StripButton>
        <StripButton label="Import page" className="h-[25px] w-[27px]"><PageIcon arrow="in" /></StripButton>
        <StripButton label="Export page" className="h-[25px] w-[27px]"><PageIcon arrow="out" /></StripButton>
        <StripSep />
        <StripButton label="Pin" className="h-[25px] w-[28px]"><PinIcon /></StripButton>
        <StripSep />
        <StripButton label="Swap" className="h-[25px] w-[27px]"><SwapIcon /></StripButton>
      </div>

      <div className="w-[515px]">
        <div className={ROW}>
          <label htmlFor="datetime" className={LABEL}>Date/Time</label>
          <input id="datetime" type="text" defaultValue="4/14/2008 10:26:" className={FIELD + " ml-px w-[143px]"} />
          <label htmlFor="account" className={GAP_LABEL}>Account</label>
          <input id="account" type="text" className={FIELD + " w-[170px]"} />
        </div>
        <div className="flex h-[30px] items-center pt-[2px] pl-[132px]">
          <label className="flex w-[58px] items-center gap-[8px]">
            <input type="checkbox" className={CHECK} />
            Mr
          </label>
          <label className="flex items-center gap-[8px]">
            <input type="checkbox" className={CHECK} />
            Ms
          </label>
        </div>
        <div className={ROW}>
          <label htmlFor="first" className={LABEL + " " + REQUIRED}>First Name</label>
          <input id="first" type="text" className={FIELD + " ml-px w-[143px]"} />
          <input type="text" aria-label="Middle initial" className={FIELD + " ml-px w-[25px]"} />
          <label htmlFor="last" className={GAP_LABEL + " " + REQUIRED}>Last</label>
          <input id="last" type="text" className={FIELD + " w-[170px]"} />
        </div>
        <div className={ROW}>
          <label htmlFor="address" className={LABEL + " " + REQUIRED}>Address</label>
          <input id="address" type="text" className={FIELD + " ml-px flex-1"} />
          <input type="text" aria-label="Apartment number" className={FIELD + " ml-[11px] w-[69px]"} />
        </div>
        <div className={ROW}>
          <label htmlFor="city" className={LABEL + " " + REQUIRED}>City</label>
          <input id="city" type="text" className={FIELD + " ml-px w-[143px]"} />
          <label htmlFor="zip" className={GAP_LABEL + " " + REQUIRED}>Zip</label>
          <input id="zip" type="text" className={FIELD + " w-[170px]"} />
        </div>
        <div className={ROW}>
          <label htmlFor="phone" className={LABEL + " " + REQUIRED}>Phone</label>
          <input id="phone" type="text" className={FIELD + " ml-px w-[143px]"} />
        </div>
        <div className="mt-[30px] flex h-[27px] items-center">
          <label htmlFor="email" className={LABEL}>Email</label>
          <input id="email" type="text" className={FIELD + " ml-px flex-1"} />
        </div>
      </div>

      <div className="mt-auto flex flex-col text-[#f80808]">
        <label className="flex h-[24px] items-center gap-[8px] pl-[4px]">
          <input type="checkbox" className={CHECK} />
          Follow-up Call Required?
        </label>
        <label className="flex h-[24px] items-center gap-[8px] pl-[4px]">
          <input type="checkbox" className={CHECK} />
          Follow-up Call Completed?
        </label>
      </div>

      <div className="mt-[10px] mb-[14px] flex items-start">
        <div className="w-[409px]">
          <div className="flex h-[32px] items-start">
            <label htmlFor="paddr" className={"w-[127px] shrink-0 pr-[4px] text-right leading-[26px] " + REQUIRED}>Problem Addr.</label>
            <input id="paddr" type="text" className={FIELD + " ml-[9px] flex-1"} />
          </div>
          <div className="flex items-start">
            <label htmlFor="pcity" className={"w-[127px] shrink-0 pr-[2px] text-right leading-[24px] " + REQUIRED}>City/Zip</label>
            <input id="pcity" type="text" className={FIELD + " ml-[9px] w-[158px]"} />
            <input type="text" aria-label="Problem zip" className={FIELD + " ml-[5px] flex-1"} />
          </div>
        </div>
        <fieldset className="ml-[4px]">
          <legend className="leading-[22px]">Locate Using</legend>
          <div className="flex h-[20px] items-center text-[#aeab9c] [text-shadow:1px_1px_0_#fff]">
            <label className="flex w-[95px] items-center gap-[8px]">
              <input
                type="radio"
                name="locate"
                defaultChecked
                disabled
                className="size-[20px] appearance-none rounded-full border-4 border-black bg-radial from-[#a5a294] from-30% to-[#f1efe4] to-45%"
              />
              Streets
            </label>
            <label className="flex items-center gap-[8px]">
              <input type="radio" name="locate" disabled className="size-[20px] appearance-none rounded-full border-4 border-black bg-[#fbfaf4]" />
              Parcels
            </label>
          </div>
          <input
            type="range"
            aria-label="Locate range"
            min="0"
            max="100"
            defaultValue="21"
            className="ml-[3px] block h-[20px] w-[176px] appearance-none bg-transparent [&::-webkit-slider-runnable-track]:h-[5px] [&::-webkit-slider-runnable-track]:border-t-3 [&::-webkit-slider-runnable-track]:border-b-2 [&::-webkit-slider-runnable-track]:border-t-[#8d8a7c] [&::-webkit-slider-runnable-track]:border-b-white [&::-webkit-slider-runnable-track]:bg-[#c9c6b6] [&::-webkit-slider-thumb]:-mt-[5px] [&::-webkit-slider-thumb]:h-[14px] [&::-webkit-slider-thumb]:w-[7px] [&::-webkit-slider-thumb]:appearance-none [&::-webkit-slider-thumb]:rounded-b-[4px] [&::-webkit-slider-thumb]:border-r-2 [&::-webkit-slider-thumb]:border-b-2 [&::-webkit-slider-thumb]:border-[#8d8a7c] [&::-webkit-slider-thumb]:bg-[#f4f2e8]"
          />
        </fieldset>
      </div>
    </div>
  );
}

const COLUMNS = [
  ["Call No.", "w-[77px]"],
  ["Date Time", "w-[98px]"],
  ["Account", "w-[84px]"],
  ["First", "w-[49px]"],
  ["M.I.", "w-[48px]"],
  ["Last", "w-[51px]"],
  ["Title", "w-[51px]"],
  ["Address", "w-[80px]"],
  ["Apt No.", "w-[77px]"],
  ["City", "w-[46px]"],
  ["", ""],
];

function CallersTable() {
  return (
    <div className="flex min-h-0 flex-1 flex-col">
      <div className="flex h-[43px] items-start border-t-4 border-double border-[#8d8a7c] pt-px pl-[5px]">
        <StripButton label="Map" className="mt-[3px] h-[27px] w-[28px]"><GlobeIcon /></StripButton>
        <StripButton label="Notes" className="mt-[3px] ml-[8px] h-[27px] w-[27px]"><BookPenIcon /></StripButton>
        <StripButton label="Callers" pressed className="ml-[6px] h-[34px] w-[36px]"><PeopleIcon /></StripButton>
        <StripButton label="Report" className="mt-[3px] ml-[8px] h-[27px] w-[24px]"><ReportIcon /></StripButton>
        <span className="mt-[2px] ml-[12px] h-[29px] w-[2px] border-l border-[#aaa797] bg-white" />
        <StripButton label="Remove" className="mt-[3px] ml-[11px] h-[27px] w-[24px]"><MinusIcon /></StripButton>
        <StripButton label="Go" className="mt-[3px] ml-[13px] h-[27px] w-[24px]"><GoIcon /></StripButton>
        <input id="callers" type="text" className="mt-px ml-[11px] h-[31px] w-[148px] border-2 border-[#14140c] bg-[#ffffc0] px-[3px] outline-none" />
        <label htmlFor="callers" className="ml-[5px] leading-[34px]">Number Of Callers:</label>
      </div>
      <div className="mr-[5px] flex min-h-0 flex-1 flex-col overflow-hidden border-2 border-black bg-[#ffffc0]">
        <table className="w-full flex-1 table-fixed border-collapse whitespace-nowrap">
          <colgroup>
            {COLUMNS.map((c, i) => (
              <col key={i} className={c[1]} />
            ))}
          </colgroup>
          <thead>
            <tr className="h-[28px]">
              {COLUMNS.map((c, i) => (
                <th
                  key={i}
                  scope="col"
                  className={
                    i === 10
                      ? "border-b-2 border-[#77746a] bg-[#ece9d8]"
                      : "border-r-2 border-b-2 border-[#77746a] bg-[#ece9d8] px-0 text-center font-normal shadow-[inset_1px_1px_0_#fff]"
                  }
                >
                  {c[0]}
                </th>
              ))}
            </tr>
          </thead>
          <tbody>
            {Array.from({ length: 13 }, (_, r) => (
              <tr key={r}>
                {COLUMNS.map((c, i) => (
                  <td key={i} className="border-r-2 border-b-2 border-[#efe6cd] p-0" />
                ))}
              </tr>
            ))}
          </tbody>
        </table>
        <div className="flex h-[27px] shrink-0 items-center bg-[#f8f8f4]">
          <ScrollButton dir="left" />
          <div className="ml-[2px] flex h-[25px] w-[168px] items-center justify-center gap-[2px] rounded-[3px] border-2 border-white bg-linear-to-b from-[#cbd9fe] to-[#b0c5f8]">
            <span className="h-[9px] w-px bg-[#f0f5ff]" />
            <span className="h-[9px] w-px bg-[#8aa6e8]" />
            <span className="h-[9px] w-px bg-[#f0f5ff]" />
            <span className="h-[9px] w-px bg-[#8aa6e8]" />
          </div>
          <span className="flex-1" />
          <ScrollButton dir="right" />
        </div>
      </div>
    </div>
  );
}

export default function App() {
  return (
    <div className="min-h-screen bg-white px-4 pt-12 pb-12 font-['Liberation_Sans',Arial,sans-serif] text-[17px] text-[#0c0c0a]">
      <Gradients />
      <main className="mx-auto w-full max-w-[1304px] rounded-t-[10px] bg-linear-to-r from-[#0831d9] via-[#0a4fe0] to-[#0831d9]">
        <TitleBar />
        <div className="mx-[6px] bg-[#ebe8d9]">
          <Toolbar />
          <div className="grid grid-cols-[611px_minmax(0,1fr)]">
            <LeftPanel />
            <section className="flex min-w-0 flex-col border-l-3 border-[#8d8a7c]">
              <CallerForm />
              <CallersTable />
            </section>
          </div>
          <footer className="flex h-[25px] items-center border-t-2 border-[#faf9f2] pl-[8px]">
            <PlayIcon />
          </footer>
        </div>
        <div className="h-[6px] bg-linear-to-b from-[#0a4fe0] to-[#0420a0]" />
      </main>
    </div>
  );
}
